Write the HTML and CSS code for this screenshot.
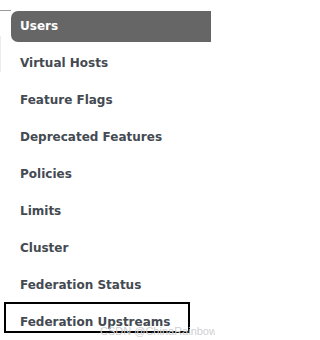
FILE: index.html
```html
<!DOCTYPE html>
<html>
<head>
<meta charset="utf-8">
<link rel="stylesheet" href="styles.css">
</head>
<body>
<div class="frame">
  <div class="edge-top"></div>
  <div class="edge-left"></div>
  <ul class="menu">
    <li><a class="selected" href="#">Users</a></li>
    <li><a href="#">Virtual Hosts</a></li>
    <li><a href="#">Feature Flags</a></li>
    <li><a href="#">Deprecated Features</a></li>
    <li><a href="#">Policies</a></li>
    <li><a href="#">Limits</a></li>
    <li><a href="#">Cluster</a></li>
    <li><a href="#">Federation Status</a></li>
    <li class="marked"><a href="#">Federation Upstreams</a></li>
  </ul>
  <div class="watermark">CSDN @ChinaRainbowSea</div>
</div>
</body>
</html>
```

FILE: styles.css
```css
html, body {
  margin: 0;
  padding: 0;
  background: #fff;
}
.frame {
  position: relative;
  width: 215px;
  height: 340px;
  overflow: hidden;
  font-family: "DejaVu Sans", Verdana, sans-serif;
}
.edge-top {
  position: absolute;
  left: 0;
  top: 10px;
  width: 11px;
  height: 1px;
  background: #9a9a9a;
}
.edge-left {
  position: absolute;
  left: 0;
  top: 36px;
  width: 1px;
  height: 36px;
  background: #ececec;
}
.menu {
  list-style: none;
  margin: 0;
  padding: 11px 0 0 11px;
  display: flex;
  flex-direction: column;
  gap: 6px;
}
.menu li {
  position: relative;
}
.menu a {
  display: block;
  width: 182px;
  padding: 7px 9px;
  line-height: 17px;
  font-size: 12px;
  font-weight: bold;
  color: #444a52;
  text-decoration: none;
  border-radius: 7px 0 0 7px;
}
.menu a.selected {
  background: #666666;
  color: #ffffff;
}
.marked::after {
  content: "";
  position: absolute;
  left: -7px;
  top: -5px;
  width: 182px;
  height: 27px;
  border: 2px solid #000;
  pointer-events: none;
}
.watermark {
  position: absolute;
  left: 100px;
  top: 325px;
  font-family: "Liberation Sans", Arial, sans-serif;
  font-size: 11px;
  line-height: 12px;
  color: #d0d0d0;
  white-space: nowrap;
}
```
